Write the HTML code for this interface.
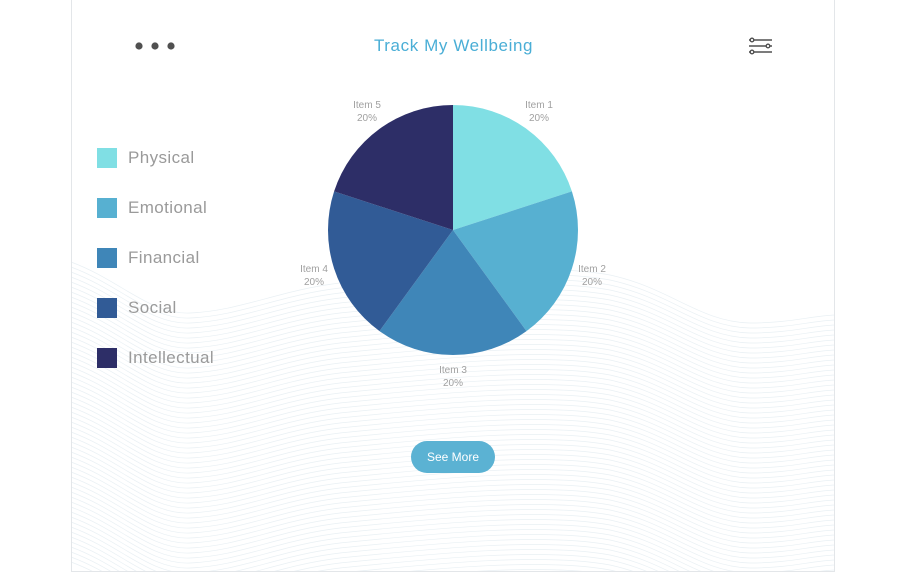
<!DOCTYPE html>
<html><head><meta charset="utf-8"><style>
html,body{margin:0;padding:0;background:#fff;width:907px;height:573px;overflow:hidden;font-family:"Liberation Sans",sans-serif;position:relative}
.card{position:absolute;left:71px;top:0;width:764px;height:572px;border:1px solid #e3e6e9;border-top:none;box-sizing:border-box}
.title{position:absolute;left:0;width:907px;top:36px;text-align:center;color:#4aaed6;font-size:17px;letter-spacing:0.6px}
.leg{position:absolute;left:97px;font-size:17px;color:#9a9a9a;letter-spacing:0.4px}
.leg i{position:absolute;left:0;top:0;width:20px;height:20px}
.leg span{position:absolute;left:31px;top:0px;white-space:nowrap}
.lbl{position:absolute;font-size:10px;color:#a0a0a0;text-align:center;line-height:13px;width:60px}
.btn{position:absolute;left:411px;top:441px;width:84px;height:32px;border-radius:16px;background:#5bb2d3;color:#fff;font-size:12px;text-align:center;line-height:32px}
</style></head><body>
<svg width="907" height="573" style="position:absolute;left:0;top:0;display:block">
<defs><path id="w" d="M71,262 C120,280 150,315 190,313 C240,311 280,290 340,283 C420,275 540,262 610,275 C670,288 700,322 750,323 C790,323 810,316 835,315" fill="none" stroke="#e9f0f4" stroke-width="0.7"/></defs>
<g>
<use href="#w"/><use href="#w" y="5"/><use href="#w" y="10"/><use href="#w" y="15"/><use href="#w" y="20"/><use href="#w" y="25"/><use href="#w" y="30"/><use href="#w" y="35"/><use href="#w" y="40"/><use href="#w" y="45"/><use href="#w" y="50"/><use href="#w" y="55"/><use href="#w" y="60"/><use href="#w" y="65"/><use href="#w" y="70"/><use href="#w" y="75"/><use href="#w" y="80"/><use href="#w" y="85"/><use href="#w" y="90"/><use href="#w" y="95"/><use href="#w" y="100"/><use href="#w" y="105"/><use href="#w" y="110"/><use href="#w" y="115"/><use href="#w" y="120"/><use href="#w" y="125"/><use href="#w" y="130"/><use href="#w" y="135"/><use href="#w" y="140"/><use href="#w" y="145"/><use href="#w" y="150"/><use href="#w" y="155"/><use href="#w" y="160"/><use href="#w" y="165"/><use href="#w" y="170"/><use href="#w" y="175"/><use href="#w" y="180"/><use href="#w" y="185"/><use href="#w" y="190"/><use href="#w" y="195"/><use href="#w" y="200"/><use href="#w" y="205"/><use href="#w" y="210"/><use href="#w" y="215"/><use href="#w" y="220"/><use href="#w" y="225"/><use href="#w" y="230"/><use href="#w" y="235"/><use href="#w" y="240"/><use href="#w" y="245"/><use href="#w" y="250"/><use href="#w" y="255"/><use href="#w" y="260"/><use href="#w" y="265"/><use href="#w" y="270"/><use href="#w" y="275"/><use href="#w" y="280"/><use href="#w" y="285"/><use href="#w" y="290"/><use href="#w" y="295"/><use href="#w" y="300"/>
</g>
<rect x="835.5" y="0" width="80" height="573" fill="#fff"/>
<rect x="0" y="571" width="907" height="5" fill="#fff"/>
<path d="M453,230 L453,105 A125,125 0 0 1 571.9,191.4 Z" fill="#80dfe4"/>
<path d="M453,230 L571.9,191.4 A125,125 0 0 1 526.5,331.1 Z" fill="#57b0d1"/>
<path d="M453,230 L526.5,331.1 A125,125 0 0 1 379.5,331.1 Z" fill="#3f86b8"/>
<path d="M453,230 L379.5,331.1 A125,125 0 0 1 334.1,191.4 Z" fill="#315b96"/>
<path d="M453,230 L334.1,191.4 A125,125 0 0 1 453,105 Z" fill="#2d2e67"/>
<circle cx="139" cy="46" r="3.6" fill="#505050"/><circle cx="155" cy="46" r="3.6" fill="#505050"/><circle cx="171" cy="46" r="3.6" fill="#505050"/>
<g stroke="#505050" stroke-width="1.4" fill="#fff">
<line x1="749" y1="40" x2="772" y2="40"/><line x1="749" y1="46" x2="772" y2="46"/><line x1="749" y1="52" x2="772" y2="52"/>
<circle cx="752" cy="40" r="1.8"/><circle cx="768" cy="46" r="1.8"/><circle cx="752" cy="52" r="1.8"/>
</g>
</svg>
<div class="card"></div>
<div class="title">Track My Wellbeing</div>
<div class="leg" style="top:148px"><i style="background:#80dfe4"></i><span>Physical</span></div>
<div class="leg" style="top:198px"><i style="background:#57b0d1"></i><span>Emotional</span></div>
<div class="leg" style="top:248px"><i style="background:#3f86b8"></i><span>Financial</span></div>
<div class="leg" style="top:298px"><i style="background:#315b96"></i><span>Social</span></div>
<div class="leg" style="top:348px"><i style="background:#2d2e67"></i><span>Intellectual</span></div>
<div class="lbl" style="left:509px;top:99px">Item 1<br>20%</div>
<div class="lbl" style="left:562px;top:263px">Item 2<br>20%</div>
<div class="lbl" style="left:423px;top:364px">Item 3<br>20%</div>
<div class="lbl" style="left:284px;top:263px">Item 4<br>20%</div>
<div class="lbl" style="left:337px;top:99px">Item 5<br>20%</div>
<div class="btn">See More</div>
</body></html>
